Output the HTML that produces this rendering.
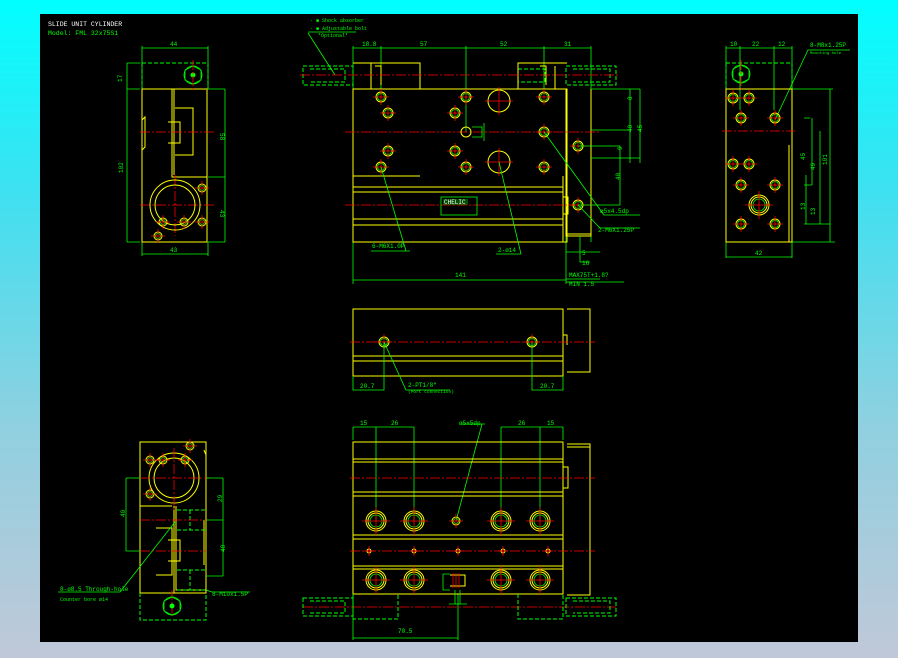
<!DOCTYPE html>
<html><head><meta charset="utf-8"><style>
html,body{margin:0;padding:0;width:898px;height:658px;overflow:hidden;background:linear-gradient(#00ffff 0%,#40e0f0 30%,#90d0e0 65%,#c0c8d8 100%);}
svg{position:absolute;left:0;top:0}
text{font-family:"Liberation Mono",monospace;font-size:6px;fill:#00ff00}
.y{stroke:#ffff00;fill:none;stroke-width:1}
.g{stroke:#00ff00;fill:none;stroke-width:0.8}
.gd{stroke:#00ff00;fill:none;stroke-width:1;stroke-dasharray:4 2}
.r{stroke:#ff0000;fill:none;stroke-width:0.8;stroke-dasharray:10 2 2 2}
.rc{stroke:#ff0000;stroke-width:0.8}
</style></head><body>
<svg width="898" height="658" viewBox="0 0 898 658">
<defs>
<g id="h"><circle r="5" class="y"/><circle r="3.5" class="g"/><path d="M-8 0H8M0-8V8" class="rc"/></g>
<g id="hs"><circle r="4" class="y"/><circle r="2.5" class="g"/><path d="M-7 0H7M0-7V7" class="rc"/></g>
<g id="hb"><circle r="10" class="y"/><circle r="8" class="y"/><circle r="6" class="g"/><path d="M-14 0H14M0-14V14" class="rc"/></g>
<g id="hp"><circle r="2" class="y"/><path d="M-5 0H5M0-5V5" class="rc"/></g>
</defs>
<rect x="40" y="14" width="818" height="628" fill="#000"/>
<text x="48" y="26" style="fill:#fff;font-size:6.5px">SLIDE UNIT CYLINDER</text>
<text x="48" y="35" style="font-size:6.5px">Model: FML 32x75S1</text>

<!-- LEFT TOP VIEW -->
<path class="g" d="M142 48H208M142 46V89M208 46V89M127 63H140M127 89H140M127 63V242M127 242H140M208 89H225M208 177H225M225 89V242M208 242H225M142 242V256M208 242V256M142 254H208"/>
<text x="170" y="46">44</text><text x="118" y="78" transform="rotate(-90 122 78)">17</text>
<text x="112" y="168" transform="rotate(-90 120 165)">102</text>
<text x="220" y="133" transform="rotate(90 220 133)">58</text><text x="220" y="210" transform="rotate(90 220 210)">43</text>
<text x="170" y="252">43</text>
<path class="gd" d="M142 63H208V89M142 63V89"/>
<circle cx="193" cy="75" r="9" class="g"/><path class="g" d="M185 70L193 66L201 70V80L193 84L185 80Z"/><circle cx="193" cy="75" r="2.5" fill="#00ff00"/>
<path class="y" d="M142 89H207V242H142V120L145 117V147L142 150ZM172 89V177H207M174 89V175M175 108H193V155H175M168 122H180V143H168"/>
<path class="r" d="M140 132H215M140 205H215M193 60V90M175 175V236"/>
<circle cx="175" cy="205" r="25" class="y"/><circle cx="175" cy="205" r="20" class="y"/>
<use href="#hs" x="163" y="222"/><use href="#hs" x="184" y="222"/><use href="#hs" x="202" y="188"/><use href="#hs" x="202" y="222"/><use href="#hs" x="158" y="236"/>

<!-- TOP MAIN VIEW -->
<text x="310" y="22" style="font-size:5px">- ■ Shock absorber</text><text x="310" y="30" style="font-size:5px">- ■ Adjustable bolt</text><text x="318" y="37" style="font-size:5px">*Optional*</text>
<path class="g" d="M308 32H356M308 33L335 75M353 48H591M353 46V89M381 46V89M466 46V132M544 46V89M591 46V242M353 176V284M566 236V284M353 280H566M566 279H600M566 282H624"/>
<text x="362" y="46">18.8</text><text x="420" y="46">57</text><text x="500" y="46">52</text><text x="564" y="46">31</text>
<text x="455" y="277">141</text>
<path class="gd" d="M303 66H353V85H303ZM310 69H345V82H310M566 66H616V85H566ZM573 69H610V82H573M518 69H545V82H518"/>
<path class="y" d="M353 63H420V89M518 89V63H567M371 63V89M375 66H381V85M540 66H546V85M555 66V89"/>
<path class="y" d="M353 89H567V242H353ZM353 176H420M353 187H563M353 192H563M353 219H563M353 225H563M563 176V242M566 89V236H591V89M563 197H568V214H563M566 234H591"/>
<path class="r" d="M300 75H620M345 132H600M345 205H600"/>
<use href="#h" x="381" y="97"/><use href="#h" x="466" y="97"/><use href="#h" x="544" y="97"/><use href="#h" x="544" y="132"/>
<use href="#h" x="381" y="167"/><use href="#h" x="466" y="167"/><use href="#h" x="544" y="167"/>
<use href="#h" x="388" y="113"/><use href="#h" x="455" y="113"/><use href="#h" x="388" y="151"/><use href="#h" x="455" y="151"/>
<circle cx="499" cy="101" r="11" class="y"/><path d="M485 101H513M499 87V115" class="rc"/>
<circle cx="499" cy="162" r="11" class="y"/><path d="M485 162H513M499 148V176" class="rc"/>
<circle cx="466" cy="132" r="5" class="y"/><path class="g" d="M472 127H482V137H472M484 123V141"/>
<use href="#h" x="578" y="146"/><use href="#h" x="578" y="205"/>
<rect x="441" y="197" width="36" height="18" class="g"/><rect x="443" y="199" width="25" height="6" fill="#00ff00" opacity="0.3"/><text x="444" y="204" style="fill:#fff;font-size:6px">CHELIC</text>
<path class="g" d="M381 167L406 251M371 251H410M499 162L521 254M496 254H521M544 132L604 215H640M578 205L600 228H640M591 89H640M591 130H628M591 158H640M578 146H620M578 205H620M620 146V205M630 89V163M640 89V163M580 236V262H590M566 252H600"/>
<text x="372" y="248">6-M6X1.0P</text><text x="498" y="252">2-ø14</text>
<text x="600" y="213">ø5x4.5dp</text><text x="598" y="232">2-M6X1.25P</text>
<text x="569" y="277">MAX75T+1.8?</text><text x="569" y="286">MIN     1.5</text>
<text x="582" y="265">16</text><text x="582" y="255">5</text>
<text x="632" y="132" transform="rotate(-90 632 132)">40</text><text x="642" y="132" transform="rotate(-90 642 132)">45</text>
<text x="620" y="180" transform="rotate(-90 620 180)">40</text><text x="622" y="150" transform="rotate(-90 622 150)">9</text><text x="632" y="100" transform="rotate(-90 632 100)">8</text>

<!-- RIGHT VIEW -->
<path class="g" d="M726 48H792M726 46V89M740 46V110M774 46V110M792 46V89M792 89H833M804 118H810M804 185H812M804 224H830M830 89V242M812 118V185M820 131V224M806 175V224M792 242H835M726 242V258M792 242V258M726 257H792M775 120L808 50H850"/>
<text x="730" y="46">10</text><text x="752" y="46">22</text><text x="778" y="46">12</text>
<text x="810" y="47">8-M8x1.25P</text><text x="810" y="54" style="font-size:4px">Mounting hole</text>
<text x="755" y="255">42</text>
<text x="805" y="160" transform="rotate(-90 805 160)">45</text><text x="815" y="170" transform="rotate(-90 815 170)">49</text><text x="827" y="165" transform="rotate(-90 827 165)">101</text>
<text x="805" y="210" transform="rotate(-90 805 210)">13</text><text x="815" y="215" transform="rotate(-90 815 215)">13</text>
<path class="gd" d="M726 63H792V89M726 63V89"/>
<circle cx="741" cy="74" r="9" class="g"/><path class="g" d="M733 69L741 65L749 69V79L741 83L733 79Z"/><circle cx="741" cy="74" r="2.5" fill="#00ff00"/>
<path class="y" d="M726 89H792V242H726ZM789 145V242"/>
<path class="r" d="M722 131H795M741 60V90"/>
<use href="#h" x="733" y="98"/><use href="#h" x="749" y="98"/><use href="#h" x="741" y="118"/><use href="#h" x="775" y="118"/>
<use href="#h" x="733" y="164"/><use href="#h" x="749" y="164"/><use href="#h" x="741" y="185"/><use href="#h" x="775" y="185"/>
<use href="#h" x="741" y="224"/><use href="#h" x="775" y="224"/><use href="#hb" x="759" y="205"/>

<!-- SIDE VIEW (middle) -->
<path class="y" d="M353 309H563V376H353ZM353 356H563M353 361H563M563 309V376M567 309H590V372H567M563 335H567V345"/>
<path class="r" d="M350 342H595"/>
<use href="#h" x="384" y="342"/><use href="#h" x="532" y="342"/>
<path class="g" d="M353 376V390H384V342M532 342V390H563V376M384 342L406 390H450"/>
<text x="360" y="388">20.7</text><text x="540" y="388">20.7</text>
<text x="408" y="387">2-PT1/8"</text><text x="408" y="393" style="font-size:4.5px">(Port connection)</text>

<!-- BOTTOM VIEW -->
<path class="g" d="M353 427V440M376 427V521M414 427V521M501 427V521M540 427V521M563 427V440M353 427H414M501 427H563M456 521L482 424M461 424H485M353 594V640M458 594V640M353 638H458"/>
<text x="360" y="425">15</text><text x="391" y="425">26</text><text x="459" y="425">ø5x5dp</text><text x="518" y="425">26</text><text x="547" y="425">15</text>
<text x="398" y="633">70.5</text>
<path class="y" d="M353 442H563V594H353ZM353 459H563M353 462H563M353 492H563M353 496H563M353 535H563M353 539H563M353 566H563M353 569H563M567 444H590V595H567M567 447H590M563 467H568V488H563"/>
<path class="r" d="M350 478H595M350 551H595M303 607H616"/>
<use href="#hb" x="376" y="521"/><use href="#hb" x="414" y="521"/><use href="#hb" x="501" y="521"/><use href="#hb" x="540" y="521"/>
<use href="#hb" x="376" y="580"/><use href="#hb" x="414" y="580"/><use href="#hb" x="501" y="580"/><use href="#hb" x="540" y="580"/>
<use href="#hs" x="456" y="521"/>
<use href="#hp" x="369" y="551"/><use href="#hp" x="414" y="551"/><use href="#hp" x="458" y="551"/><use href="#hp" x="503" y="551"/><use href="#hp" x="548" y="551"/>
<path class="y" d="M450 575H465V586H450"/><path class="rc" d="M453 573V588M456 573V588M459 573V588"/>
<path class="g" d="M443 574V590M443 574H450M443 590H450M455 590V604M460 590V604M449 604H467"/>
<path class="gd" d="M353 594V619H398V594M518 594V619H563V594M303 598H353V616H303ZM310 601H345V613H310M566 598H616V616H566ZM573 601H610V613H573"/>

<!-- BOTTOM LEFT VIEW -->
<path class="y" d="M140 442H206V593H140ZM140 506H172M174 506V593M176 506V590H206M156 528H172V575H156M168 540H180V561H168M204 450L206 455M204 520V565"/>
<path class="gd" d="M177 510H206M177 530H206M190 510V530M177 570H206M177 590H206M190 570V590M140 593V620H206V593"/>
<circle cx="174" cy="478" r="25" class="y"/><circle cx="174" cy="478" r="20" class="y"/>
<path class="r" d="M140 478H210M174 448V510M140 520H206M140 551H206M172 590V616"/>
<use href="#hs" x="150" y="460"/><use href="#hs" x="163" y="460"/><use href="#hs" x="185" y="460"/><use href="#hs" x="190" y="446"/><use href="#hs" x="150" y="494"/>
<circle cx="172" cy="606" r="9" class="g"/><path class="g" d="M164 601L172 597L180 601V611L172 615L164 611Z"/><circle cx="172" cy="606" r="2.5" fill="#00ff00"/>
<path class="g" d="M126 478H140M126 551H140M126 478V551M206 478H223M206 520H223M206 576H223M223 478V576M175 522L120 592H58M206 590L212 592H250"/>
<text x="118" y="520" transform="rotate(-90 120 515)">40</text>
<text x="218" y="502" transform="rotate(-90 220 500)">29</text><text x="218" y="555" transform="rotate(-90 220 550)">40</text>
<text x="60" y="591">8-ø8.5 Through-hole</text><text x="60" y="601" style="font-size:5px">Counter bore  ø14</text>
<text x="212" y="596">8-M10x1.5P</text>
</svg>
</body></html>
